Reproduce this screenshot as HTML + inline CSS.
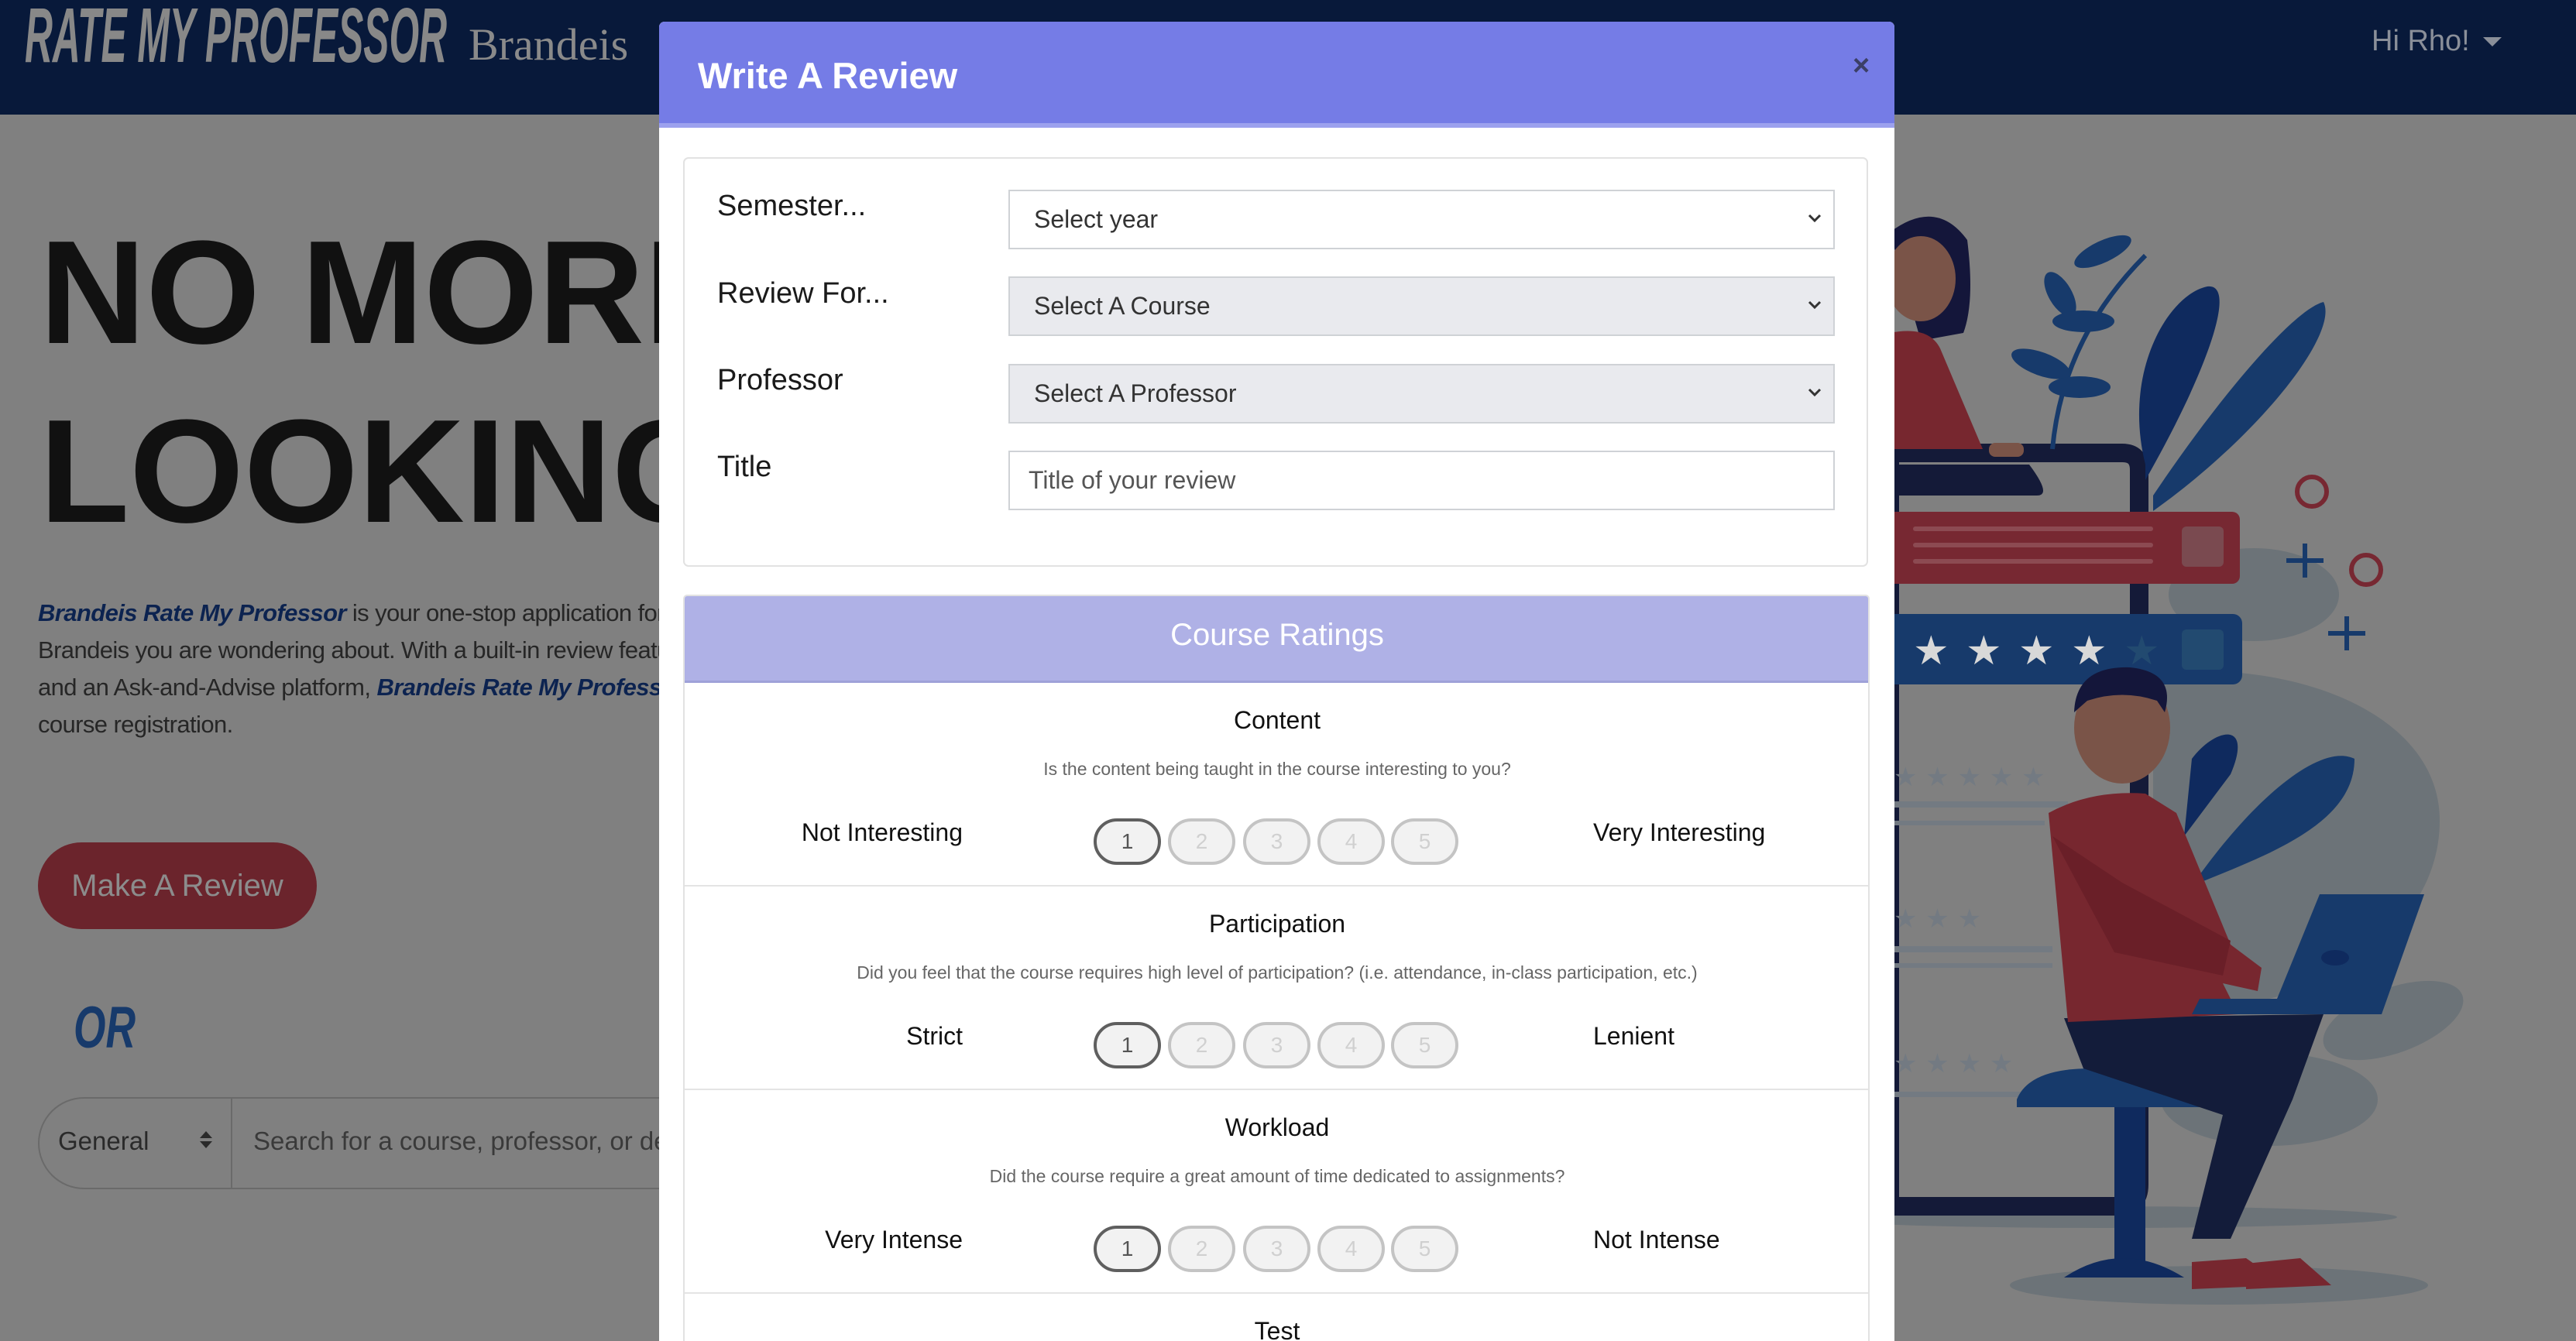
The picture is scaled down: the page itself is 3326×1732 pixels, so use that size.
<!DOCTYPE html>
<html><head><meta charset="utf-8">
<style>
*{box-sizing:border-box;margin:0;padding:0}
html,body{width:3326px;height:1732px;overflow:hidden}
body{background:#808080;font-family:"Liberation Sans",sans-serif;position:relative}
.abs{position:absolute}
.nav{left:0;top:0;width:3326px;height:148px;background:#08193a}
.hero{left:51px;font-weight:bold;font-size:190px;color:#111;line-height:1;white-space:nowrap}
.para{left:49px;top:768px;font-size:31px;line-height:48px;color:#262626;white-space:nowrap;letter-spacing:-0.6px}
.para b{color:#0c2350;font-style:italic}
.mbtn{left:49px;top:1088px;width:360px;height:112px;border-radius:56px;background:#6b242c;color:#8c8c8c;font-size:40px;text-align:center;line-height:112px}
.search{left:49px;top:1417px;width:900px;height:119px;border:2px solid #6a6a6a;border-right:none;border-radius:60px 0 0 60px}
.modal{left:851px;top:28px;width:1595px;height:1704px;background:#fff;border-radius:7px 7px 0 0;overflow:hidden}
.mh{left:0;top:0;width:1595px;height:137px;background:#757ce6;border-bottom:6px solid #9ca1ee}
.card{background:#fff;border:2px solid #e2e2e2;border-radius:7px}
.lab{left:42px;font-size:38px;color:#1a1a1a}
.sel{left:418px;width:1067px;height:77px;border:2px solid #cfd2d6;font-size:32px;color:#333;line-height:73px;padding-left:31px}
.sel svg{position:absolute;right:14px;top:28px}
.row{left:0;width:1530px;height:263px;border-bottom:2px solid #e4e4e4}
.rt{left:0;width:1530px;text-align:center;font-size:32px;color:#111}
.rq{left:0;width:1530px;text-align:center;font-size:23px;color:#666}
.ll{right:1171px;font-size:32px;color:#111;white-space:nowrap}
.rl{left:1173px;font-size:32px;color:#111;white-space:nowrap}
.b{width:87px;height:60px;border:4px solid #c4c4c4;border-radius:30px;background:#f2f2f2;color:#d0d0d0;font-size:28px;text-align:center;line-height:52px}
.b.on{border-color:#5f5f5f;color:#555}
</style></head><body>
<div class="abs nav"></div>
<svg class="abs" style="left:30px;top:8px" width="560" height="80"><text x="2" y="72" font-family="Liberation Sans" font-weight="bold" font-style="italic" font-size="100" fill="#888" textLength="545" lengthAdjust="spacingAndGlyphs">RATE MY PROFESSOR</text></svg>
<div class="abs" style="left:605px;top:24px;font-family:'Liberation Serif',serif;font-size:58px;color:#8a8a8a">Brandeis</div>
<div class="abs" style="left:3062px;top:32px;font-size:38px;color:#8a8f99">Hi Rho!</div>
<div class="abs" style="left:3206px;top:48px;width:0;height:0;border-left:12px solid transparent;border-right:12px solid transparent;border-top:12px solid #8a8f99"></div>

<div class="abs hero" style="top:283px">NO MORE</div>
<div class="abs hero" style="top:514px">LOOKING</div>
<div class="abs para"><b>Brandeis Rate My Professor</b> is your one-stop application for every course at<br>Brandeis you are wondering about. With a built-in review feature<br>and an Ask-and-Advise platform, <b>Brandeis Rate My Professor</b> is here for<br>course registration.</div>
<div class="abs mbtn">Make A Review</div>
<svg class="abs" style="left:95px;top:1285px" width="100" height="80"><text x="0" y="68" font-family="Liberation Sans" font-weight="bold" font-style="italic" font-size="76" fill="#173a6b" textLength="80" lengthAdjust="spacingAndGlyphs">OR</text></svg>
<div class="abs search"></div>
<div class="abs" style="left:298px;top:1419px;width:2px;height:115px;background:#6a6a6a"></div>
<div class="abs" style="left:75px;top:1455px;font-size:33px;color:#2a2a2a">General</div>
<div class="abs" style="left:258px;top:1461px;width:0;height:0;border-left:8px solid transparent;border-right:8px solid transparent;border-bottom:9px solid #2a2a2a"></div>
<div class="abs" style="left:258px;top:1474px;width:0;height:0;border-left:8px solid transparent;border-right:8px solid transparent;border-top:9px solid #2a2a2a"></div>
<div class="abs" style="left:327px;top:1455px;font-size:33px;color:#3a3a3a;white-space:nowrap">Search for a course, professor, or department</div>

<!-- illustration -->
<svg class="abs" style="left:2440px;top:0" width="886" height="1732">
<ellipse cx="425" cy="1660" rx="270" ry="25" fill="#6c7378"/>
<ellipse cx="275" cy="1572" rx="380" ry="14" fill="#6c7378"/>
<ellipse cx="470" cy="768" rx="110" ry="60" fill="#6c7378"/>
<path d="M340 870 C520 850 710 920 710 1060 C710 1200 560 1290 430 1300 L340 1300 Z" fill="#6c7378"/>
<ellipse cx="650" cy="1318" rx="95" ry="42" fill="#6c7378" transform="rotate(-20 650 1318)"/>
<ellipse cx="490" cy="1420" rx="140" ry="60" fill="#6c7378"/>
<path d="M0 585 L300 585 Q322 585 322 607 L322 1530 Q322 1558 294 1558 L0 1558 Z" fill="none" stroke="#141a38" stroke-width="24"/>
<path d="M-10 600 L180 600 Q210 640 190 640 L-10 640 Z" fill="#141a38"/>
<path d="M330 600 C300 480 360 380 410 370 C450 365 410 480 330 620 Z" fill="#0f2a5e"/>
<path d="M340 640 C420 520 520 400 560 390 C580 430 480 560 340 660 Z" fill="#173a6b"/>
<path d="M210 580 C220 470 270 390 330 330" stroke="#173a6b" stroke-width="6" fill="none"/>
<ellipse cx="275" cy="325" rx="40" ry="14" fill="#173a6b" transform="rotate(-25 275 325)"/>
<ellipse cx="220" cy="380" rx="15" ry="32" fill="#173a6b" transform="rotate(-30 220 380)"/>
<ellipse cx="250" cy="415" rx="40" ry="14" fill="#173a6b"/>
<ellipse cx="195" cy="470" rx="40" ry="15" fill="#173a6b" transform="rotate(20 195 470)"/>
<ellipse cx="245" cy="500" rx="40" ry="14" fill="#173a6b"/>
<rect x="-10" y="661" width="462" height="93" rx="10" fill="#772832"/>
<rect x="30" y="680" width="310" height="6" rx="3" fill="#8c4a52"/><rect x="30" y="701" width="310" height="6" rx="3" fill="#8c4a52"/><rect x="30" y="722" width="310" height="6" rx="3" fill="#8c4a52"/>
<rect x="377" y="680" width="54" height="52" rx="6" fill="#7a4a50"/>
<rect x="-10" y="793" width="465" height="91" rx="12" fill="#173a6b"/>
<rect x="377" y="813" width="54" height="52" rx="6" fill="#224a70"/>
<g fill="#d8d8d8" font-size="52" font-family="DejaVu Sans"><text x="30" y="858">★</text><text x="98" y="858">★</text><text x="166" y="858">★</text><text x="234" y="858">★</text><text x="302" y="858" fill="#224a70">★</text></g>
<g fill="#737a82" font-size="34" font-family="DejaVu Sans"><text x="5" y="1015">★ ★ ★ ★ ★</text><text x="5" y="1198">★ ★ ★</text><text x="5" y="1385">★ ★ ★ ★</text></g>
<rect x="0" y="1035" width="230" height="8" fill="#737a82"/><rect x="0" y="1060" width="200" height="6" fill="#737a82"/>
<rect x="0" y="1222" width="210" height="8" fill="#737a82"/><rect x="0" y="1244" width="210" height="6" fill="#737a82"/>
<rect x="0" y="1410" width="250" height="7" fill="#737a82"/>
<path d="M0 300 Q60 255 100 310 Q110 390 95 430 L40 440 Z" fill="#14163a"/>
<ellipse cx="40" cy="360" rx="45" ry="55" fill="#7a5448"/>
<path d="M0 430 Q50 420 65 450 L120 580 L0 580 Z" fill="#77272f"/>
<rect x="128" y="572" width="45" height="18" rx="8" fill="#7a5448"/>
<circle cx="545" cy="635" r="19" fill="none" stroke="#772832" stroke-width="6"/>
<circle cx="615" cy="736" r="19" fill="none" stroke="#772832" stroke-width="6"/>
<path d="M512 724 h48 M536 702 v44 M566 818 h48 M590 796 v44" stroke="#173a6b" stroke-width="6"/>
<path d="M390 980 C420 940 470 930 440 1000 L380 1080 Z" fill="#0f2a5e"/>
<path d="M400 1130 C480 1020 560 960 600 980 C600 1060 500 1100 400 1140 Z" fill="#173a6b"/>
<rect x="290" y="1395" width="40" height="240" fill="#0f2a5e"/>
<path d="M225 1650 Q300 1600 380 1650 Z" fill="#0f2a5e"/>
<path d="M164 1420 Q180 1380 260 1380 L410 1380 L410 1430 L164 1430 Z" fill="#173a6b"/>
<path d="M225 1315 L560 1310 L520 1420 L440 1600 L390 1600 L430 1440 L250 1380 Z" fill="#131c3a"/>
<path d="M205 1050 Q260 1020 330 1025 L370 1050 L440 1220 L480 1250 L475 1280 L430 1270 L450 1310 L230 1320 Z" fill="#77272f"/>
<path d="M210 1080 L300 1140 L440 1215 L430 1260 L290 1230 Z" fill="#6a1f28"/>
<ellipse cx="300" cy="940" rx="62" ry="72" fill="#7a5448"/>
<path d="M238 920 Q240 860 310 862 Q370 868 355 920 L345 905 Q300 890 255 905 Z" fill="#14163a"/>
<path d="M400 1290 L500 1290 L555 1155 L690 1155 L635 1310 L390 1310 Z" fill="#173a6b"/>
<ellipse cx="575" cy="1237" rx="18" ry="10" fill="#0f2a5e"/>
<path d="M390 1630 L460 1625 L510 1660 L390 1665 Z M460 1632 L530 1625 L570 1660 L460 1665 Z" fill="#77272f"/>
</svg>

<div class="abs modal">
  <div class="abs mh"></div>
  <div class="abs" style="left:50px;top:42px;font-size:47px;font-weight:bold;color:#fff">Write A Review</div>
  <div class="abs" style="left:1541px;top:36px;font-size:38px;font-weight:bold;color:#3b3f66">×</div>

  <div class="abs card" style="left:31px;top:175px;width:1530px;height:529px">
    <div class="abs lab" style="top:40px">Semester...</div>
    <div class="abs lab" style="top:153px">Review For...</div>
    <div class="abs lab" style="top:265px">Professor</div>
    <div class="abs lab" style="top:377px">Title</div>
    <div class="abs sel" style="top:40px;background:#fff">Select year<svg width="20" height="14"><path d="M3 3 L10 10 L17 3" stroke="#333" stroke-width="3" fill="none"/></svg></div>
    <div class="abs sel" style="top:152px;background:#e9eaee">Select A Course<svg width="20" height="14"><path d="M3 3 L10 10 L17 3" stroke="#333" stroke-width="3" fill="none"/></svg></div>
    <div class="abs sel" style="top:265px;background:#e9eaee">Select A Professor<svg width="20" height="14"><path d="M3 3 L10 10 L17 3" stroke="#333" stroke-width="3" fill="none"/></svg></div>
    <div class="abs sel" style="top:377px;background:#fff;padding-left:24px;color:#555">Title of your review</div>
  </div>

  <div class="abs card" style="left:31px;top:740px;width:1532px;height:1000px;overflow:hidden;border-radius:5px 5px 0 0">
    <div class="abs" style="left:0;top:0;width:1530px;height:112px;background:#afb1e6;border-bottom:3px solid #9ea1d8"></div>
    <div class="abs" style="left:0;top:28px;width:1530px;text-align:center;font-size:40px;color:#fff">Course Ratings</div>

    <div class="abs row" style="top:112px">
      <div class="abs rt" style="top:30px">Content</div>
      <div class="abs rq" style="top:98px">Is the content being taught in the course interesting to you?</div>
      <div class="abs ll" style="top:175px">Not Interesting</div>
      <div class="abs rl" style="top:175px">Very Interesting</div>
      <div class="abs b on" style="left:528px;top:175px">1</div><div class="abs b" style="left:624px;top:175px">2</div><div class="abs b" style="left:721px;top:175px">3</div><div class="abs b" style="left:817px;top:175px">4</div><div class="abs b" style="left:912px;top:175px">5</div>
    </div>
    <div class="abs row" style="top:375px">
      <div class="abs rt" style="top:30px">Participation</div>
      <div class="abs rq" style="top:98px">Did you feel that the course requires high level of participation? (i.e. attendance, in-class participation, etc.)</div>
      <div class="abs ll" style="top:175px">Strict</div>
      <div class="abs rl" style="top:175px">Lenient</div>
      <div class="abs b on" style="left:528px;top:175px">1</div><div class="abs b" style="left:624px;top:175px">2</div><div class="abs b" style="left:721px;top:175px">3</div><div class="abs b" style="left:817px;top:175px">4</div><div class="abs b" style="left:912px;top:175px">5</div>
    </div>
    <div class="abs row" style="top:638px">
      <div class="abs rt" style="top:30px">Workload</div>
      <div class="abs rq" style="top:98px">Did the course require a great amount of time dedicated to assignments?</div>
      <div class="abs ll" style="top:175px">Very Intense</div>
      <div class="abs rl" style="top:175px">Not Intense</div>
      <div class="abs b on" style="left:528px;top:175px">1</div><div class="abs b" style="left:624px;top:175px">2</div><div class="abs b" style="left:721px;top:175px">3</div><div class="abs b" style="left:817px;top:175px">4</div><div class="abs b" style="left:912px;top:175px">5</div>
    </div>
    <div class="abs rt" style="top:931px">Test</div>
  </div>
</div>
</body></html>
